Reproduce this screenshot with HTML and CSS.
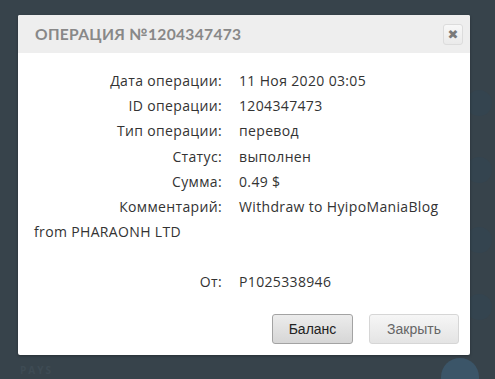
FILE: index.html
```html
<!DOCTYPE html>
<html lang="ru">
<head>
    <meta charset="UTF-8">
    <title>Операция</title>
    <link rel="stylesheet" href="styles.css">
</head>
<body>
    <div class="backdrop">
        <span class="dot dot-1"></span>
        <span class="dot dot-2"></span>
        <span class="dot dot-3"></span>
        <span class="dot dot-4"></span>
        <span class="dot dot-big"></span>
        <span class="page-label">PAYS</span>
    </div>

    <div class="dialog">
        <div class="dialog-head">
            <span class="dialog-title">Операция №1204347473</span>
            <button class="dialog-close" title="Закрыть">&#10006;</button>
        </div>
        <div class="dialog-body">
            <div class="row"><span class="label">Дата операции:</span>11 Ноя 2020 03:05</div>
            <div class="row"><span class="label">ID операции:</span>1204347473</div>
            <div class="row"><span class="label">Тип операции:</span>перевод</div>
            <div class="row"><span class="label">Статус:</span>выполнен</div>
            <div class="row"><span class="label">Сумма:</span>0.49 $</div>
            <div class="row"><span class="label">Комментарий:</span>Withdraw to HyipoManiaBlog</div>
            <div class="row">from PHARAONH LTD</div>
            <div class="row empty"></div>
            <div class="row"><span class="label">От:</span>P1025338946</div>
        </div>
        <div class="dialog-foot">
            <button class="btn btn-dark">Баланс</button>
            <button class="btn">Закрыть</button>
        </div>
    </div>
</body>
</html>
```

FILE: styles.css
```css
body {
    margin: 0;
    padding: 15px 0 0 18px;
    background-color: #37434b;
    font-family: "Open Sans", Arial, sans-serif;
    height: 379px;
    box-sizing: border-box;
    overflow: hidden;
    position: relative;
}

.backdrop {
    position: absolute;
    inset: 0;
}

.dot {
    position: absolute;
    border-radius: 50%;
    background-color: #34444f;
}

.dot-1 { left: 466px; top: 90px; width: 26px; height: 26px; }
.dot-2 { left: 466px; top: 157px; width: 26px; height: 26px; }
.dot-3 { left: 466px; top: 227px; width: 26px; height: 26px; }
.dot-4 { left: 466px; top: 294px; width: 26px; height: 26px; }

.dot-big {
    left: 441px;
    top: 358px;
    width: 38px;
    height: 38px;
    background-color: #3b5568;
}

.page-label {
    position: absolute;
    left: 20px;
    top: 364px;
    font-size: 10px;
    line-height: 12px;
    font-weight: bold;
    letter-spacing: 2px;
    color: #3e4b54;
}

.dialog {
    position: relative;
    width: 452px;
    height: 340px;
    background-color: #fff;
    border-radius: 2px;
    box-shadow: 0 1px 3px rgba(0, 0, 0, 0.3);
    display: flex;
    flex-direction: column;
}

.dialog-head {
    height: 38px;
    background-color: #eeeeee;
    border-radius: 2px 2px 0 0;
    display: flex;
    align-items: center;
    justify-content: space-between;
    padding: 0 7px 0 17px;
}

.dialog-title {
    font-family: Lato, "Open Sans", sans-serif;
    font-weight: bold;
    font-size: 15.6px;
    letter-spacing: 0.3px;
    text-transform: uppercase;
    color: #888;
}

.dialog-close {
    width: 20px;
    height: 21px;
    padding: 0;
    border: 1px solid #dcdcdc;
    border-radius: 3px;
    background: linear-gradient(#f8f8f8, #eaeaea);
    color: #7a7a7a;
    font-size: 13px;
    font-weight: bold;
    line-height: 19px;
    font-family: "DejaVu Sans", sans-serif;
}

.dialog-body {
    padding: 15px 16px 0 16px;
    font-size: 14px;
    letter-spacing: 0.35px;
    color: #333;
}

.row {
    line-height: 25.2px;
}

.row.empty {
    height: 25px;
}

.label {
    display: inline-block;
    width: 188px;
    padding-right: 17px;
    text-align: right;
}

.dialog-foot {
    margin-top: auto;
    padding: 0 11px 11px 0;
    display: flex;
    justify-content: flex-end;
    gap: 16px;
}

.btn {
    height: 30px;
    padding: 0 14px;
    font-family: "Liberation Sans", Arial, sans-serif;
    font-size: 14px;
    color: #666;
    border: 1px solid #d6d6d6;
    border-radius: 3px;
    background: linear-gradient(#f6f6f6, #e4e4e4);
}

.btn-dark {
    width: 81px;
    color: #222;
    border-color: #a3a3a3;
    background: linear-gradient(#ececec, #d6d6d6);
}

.btn:last-child {
    width: 90px;
}
```
